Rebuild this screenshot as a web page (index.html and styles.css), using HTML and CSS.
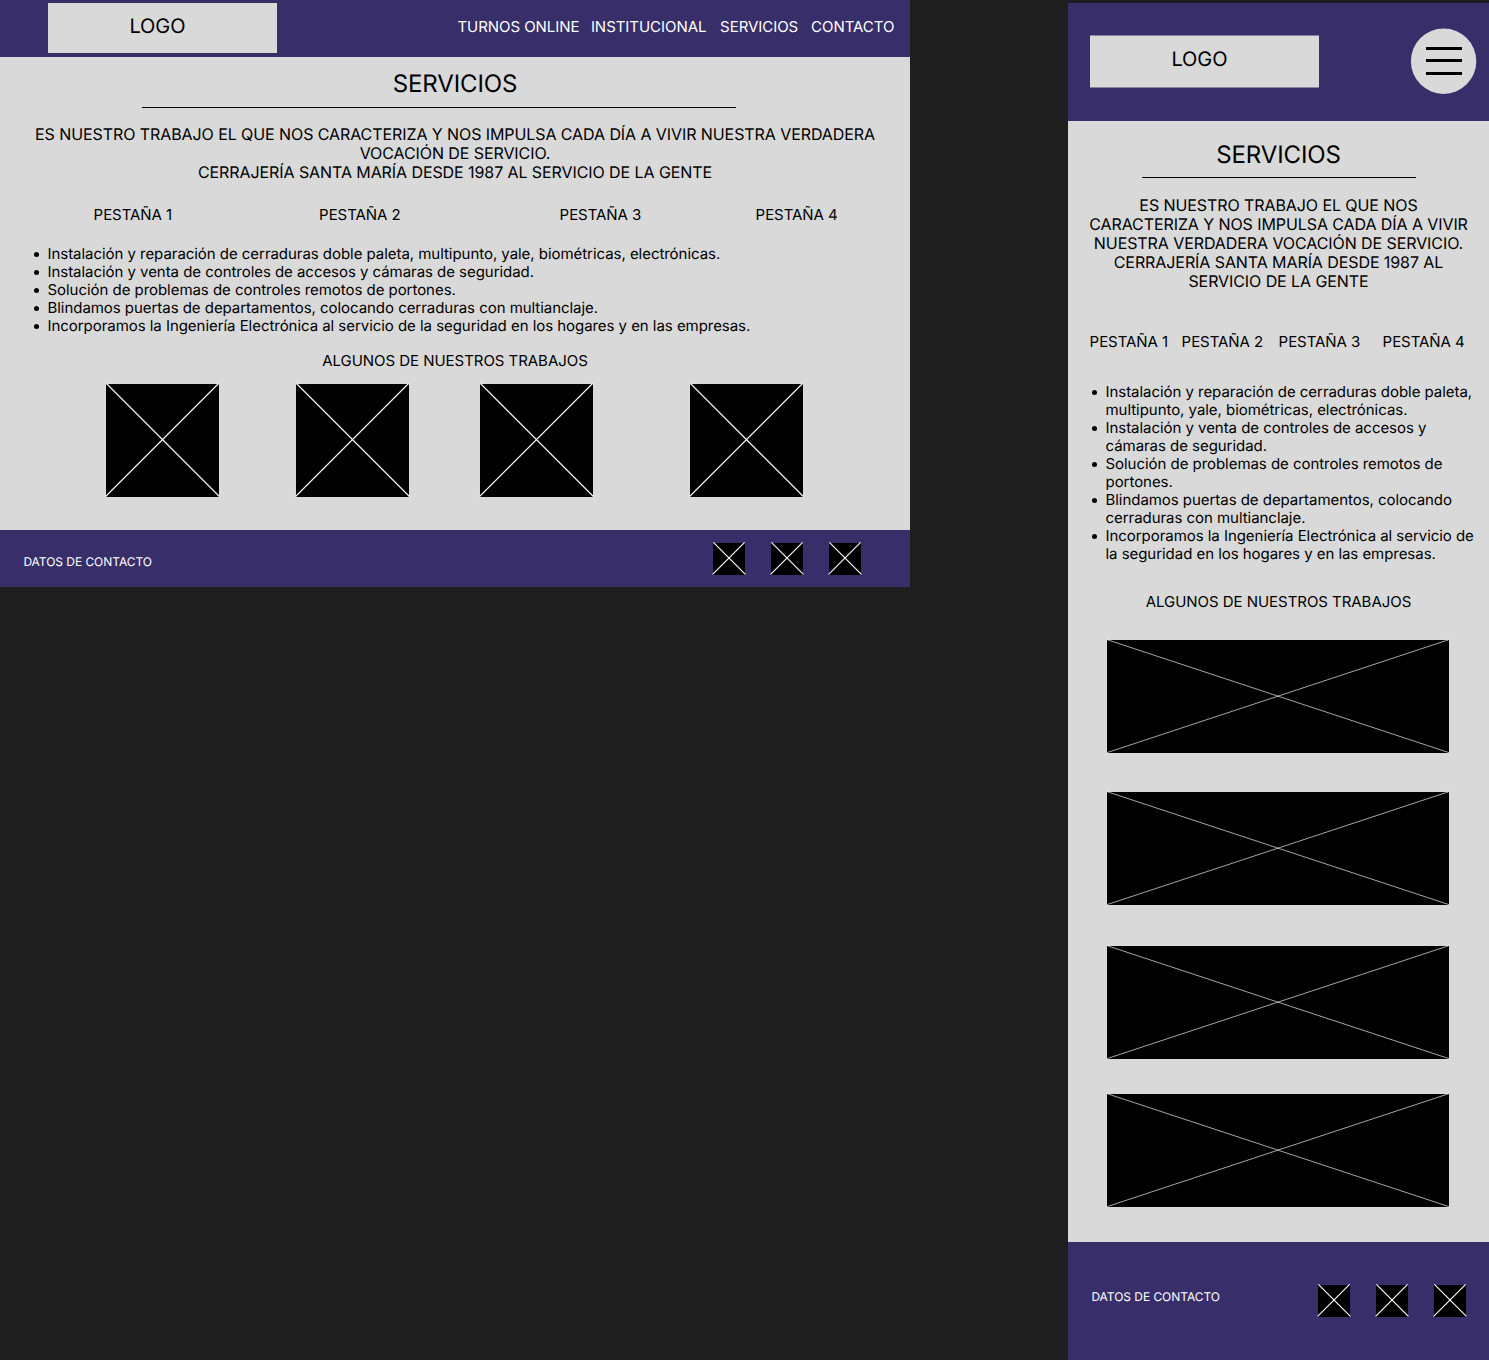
FILE: index.html
```html
<!DOCTYPE html>
<html lang="es">
<head>
<meta charset="utf-8">
<title>Servicios</title>
<link rel="stylesheet" href="styles.css">
</head>
<body>
<svg width="0" height="0" class="defs">
  <symbol id="cross-small" viewBox="0 0 32 32" overflow="visible">
    <rect width="32" height="32"/>
    <path d="M.4-.6l32 32M-.4 31.4l32-32" stroke="#fff" stroke-width="1.15"/>
  </symbol>
  <symbol id="cross-square" viewBox="0 0 113 113" overflow="visible">
    <rect width="113" height="113"/>
    <path d="M.4-.5l113 113M-.4 112.5l113-113" stroke="#fff" stroke-width="1.1"/>
  </symbol>
  <symbol id="cross-wide" viewBox="0 0 342 113" overflow="visible">
    <rect width="342" height="113"/>
    <path d="M.16-.3l342 113M-.16 112.7l342-113" stroke="#fff" stroke-width=".65"/>
  </symbol>
</svg>
<div class="board">
  <div class="page desktop">
    <header class="header">
      <div class="logo">LOGO</div>
      <nav class="nav"><a>TURNOS ONLINE</a><a>INSTITUCIONAL</a><a>SERVICIOS</a><a>CONTACTO</a></nav>
    </header>
    <main class="main">
      <h1 class="title">SERVICIOS</h1>
      <hr class="rule">
      <p class="intro">ES NUESTRO TRABAJO EL QUE NOS CARACTERIZA Y NOS IMPULSA CADA DÍA A VIVIR NUESTRA VERDADERA VOCACIÓN DE SERVICIO.<br>CERRAJERÍA SANTA MARÍA DESDE 1987 AL SERVICIO DE LA GENTE</p>
      <div class="tabs"><span>PESTAÑA 1</span><span>PESTAÑA 2</span><span>PESTAÑA 3</span><span>PESTAÑA 4</span></div>
      <ul class="list">
        <li>Instalación y reparación de cerraduras doble paleta, multipunto, yale, biométricas, electrónicas.</li>
        <li>Instalación y venta de controles de accesos y cámaras de seguridad.</li>
        <li>Solución de problemas de controles remotos de portones.</li>
        <li>Blindamos puertas de departamentos, colocando cerraduras con multianclaje.</li>
        <li>Incorporamos la Ingeniería Electrónica al servicio de la seguridad en los hogares y en las empresas.</li>
      </ul>
      <h2 class="subtitle">ALGUNOS DE NUESTROS TRABAJOS</h2>
      <div class="works">
        <svg class="work"><use href="#cross-square"/></svg>
        <svg class="work"><use href="#cross-square"/></svg>
        <svg class="work"><use href="#cross-square"/></svg>
        <svg class="work"><use href="#cross-square"/></svg>
      </div>
    </main>
    <footer class="footer">
      <span class="contact">DATOS DE CONTACTO</span>
      <div class="social">
        <svg class="icon"><use href="#cross-small"/></svg>
        <svg class="icon"><use href="#cross-small"/></svg>
        <svg class="icon"><use href="#cross-small"/></svg>
      </div>
    </footer>
  </div>

  <div class="page mobile">
    <header class="header">
      <div class="logo">LOGO</div>
      <svg class="menu" viewBox="0 0 66 66">
        <circle cx="32.6" cy="33.2" r="32.7" fill="#d9d9d9"/>
        <path d="M15 20.5h36M15 32.5h36M15 45.5h36" stroke="#000" stroke-width="3"/>
      </svg>
    </header>
    <main class="main">
      <h1 class="title">SERVICIOS</h1>
      <hr class="rule">
      <p class="intro">ES NUESTRO TRABAJO EL QUE NOS CARACTERIZA Y NOS IMPULSA CADA DÍA A VIVIR NUESTRA VERDADERA VOCACIÓN DE SERVICIO.<br>CERRAJERÍA SANTA MARÍA DESDE 1987 AL SERVICIO DE LA GENTE</p>
      <div class="tabs"><span>PESTAÑA 1</span><span>PESTAÑA 2</span><span>PESTAÑA 3</span><span>PESTAÑA 4</span></div>
      <ul class="list">
        <li>Instalación y reparación de cerraduras doble paleta, multipunto, yale, biométricas, electrónicas.</li>
        <li>Instalación y venta de controles de accesos y cámaras de seguridad.</li>
        <li>Solución de problemas de controles remotos de portones.</li>
        <li>Blindamos puertas de departamentos, colocando cerraduras con multianclaje.</li>
        <li>Incorporamos la Ingeniería Electrónica al servicio de la seguridad en los hogares y en las empresas.</li>
      </ul>
      <h2 class="subtitle">ALGUNOS DE NUESTROS TRABAJOS</h2>
      <div class="works">
        <svg class="work"><use href="#cross-wide"/></svg>
        <svg class="work"><use href="#cross-wide"/></svg>
        <svg class="work"><use href="#cross-wide"/></svg>
        <svg class="work"><use href="#cross-wide"/></svg>
      </div>
    </main>
    <footer class="footer">
      <span class="contact">DATOS DE CONTACTO</span>
      <div class="social">
        <svg class="icon"><use href="#cross-small"/></svg>
        <svg class="icon"><use href="#cross-small"/></svg>
        <svg class="icon"><use href="#cross-small"/></svg>
      </div>
    </footer>
  </div>
</div>
</body>
</html>
```
FILE: styles.css
```css
* { box-sizing: border-box; }
body {
  margin: 0;
  background: #1e1e1e;
  color: #000;
  font-family: Inter, "Liberation Sans", sans-serif;
  font-size: 15px;
  line-height: 18px;
  letter-spacing: -0.045px;
  text-rendering: geometricPrecision;
}
h1, h2, p, ul { margin: 0; padding: 0; font-weight: 400; }
svg { display: block; overflow: visible; }
.defs { height: 0; }
.board {
  display: flex;
  align-items: flex-start;
  justify-content: space-between;
  height: 1360px;
  overflow: hidden;
}
.page { background: #d9d9d9; display: flex; flex-direction: column; }
.header, .footer { background: #382e69; color: #fff; display: flex; }
.main { flex: 1; }
.logo {
  width: 229px;
  background: #d9d9d9;
  color: #000;
  font-size: 20px;
  line-height: 24px;
}
.title { font-size: 24px; line-height: 29px; text-align: center; letter-spacing: -0.13px; }
.rule { height: 1px; border: 0; background: #000; }
.intro { font-size: 16px; line-height: 19px; text-align: center; letter-spacing: -0.08px; }
.tabs, .nav { display: grid; white-space: nowrap; }
.list { list-style: none; }
.list li { display: flex; }
.list li::before {
  content: "";
  flex: none;
  width: 5px;
  height: 5px;
  margin: 7px 8.5px 0 0;
  border-radius: 50%;
  background: #000;
}
.subtitle { font-size: 15px; line-height: 18px; text-align: center; }
.work { height: 113px; }
.contact { font-size: 12px; line-height: 15px; }
.social { display: flex; gap: 26px; }
.icon { width: 32px; height: 32px; }

.desktop { width: 910px; height: 587px; }
.desktop .header { height: 57px; padding: 3px 0 0 48px; }
.desktop .logo { height: 50px; padding: 11px 0 0 81.4px; }
.desktop .nav {
  margin: 15px 0 0 180.4px;
  grid-template-columns: 133.5px 129.2px 91px 90px;
}
.desktop .main { padding-top: 12px; }
.desktop .rule { width: 594px; margin: 9px 0 17px 142px; }
.desktop .intro { margin: 0 30px; }
.desktop .tabs {
  margin: 24px 0 0 93.6px;
  grid-template-columns: 225.5px 240.5px 196px 90px;
}
.desktop .list { margin: 21px 0 17px 34px; }
.desktop .works {
  display: grid;
  grid-template-columns: 190px 184px 210px 113px;
  margin: 14px 0 0 106px;
}
.desktop .work { width: 113px; }
.desktop .footer { height: 57px; padding: 13px 49px 0 23.4px; justify-content: space-between; }
.desktop .contact { margin-top: 11px; }

.mobile { width: 421px; height: 1357px; margin-top: 3px; }
.mobile .header { height: 118px; padding: 25px 12px 0 22px; justify-content: space-between; }
.mobile .logo {
  height: 53px;
  margin-top: 7px;
  padding: 11px 0 0 81.4px;
  border: solid #8884a1;
  border-width: 1px 0;
}
.menu { width: 66px; height: 66px; }
.mobile .main { padding-top: 19px; }
.mobile .rule { width: 274px; margin: 8px 0 18px 74px; }
.mobile .intro { margin: 0 18px; }
.mobile .tabs {
  margin: 42px 0 0 21.6px;
  grid-template-columns: 92px 97px 104px 90px;
}
.mobile .list { margin: 32px 12px 30px 24px; }
.mobile .works {
  display: grid;
  grid-template-rows: 152px 154px 148px 113px;
  margin: 29px 0 0 39px;
}
.mobile .work { width: 342px; }
.mobile .footer { height: 118px; padding: 43px 23px 0 23.4px; justify-content: space-between; }
.mobile .contact { margin-top: 4px; }
```
